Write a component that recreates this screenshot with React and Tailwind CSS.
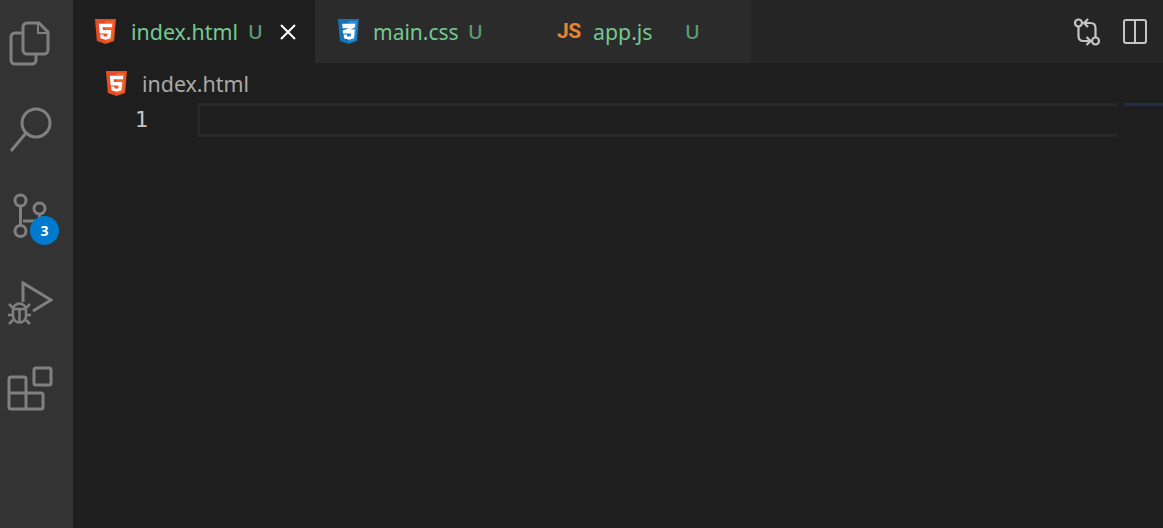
import React from 'react';

const Html5 = ({ className }) => (
  <svg className={className} viewBox="0 0 24 26">
    <path d="M1 0h22l-2 23-9 3-9-3z" fill="#e44d26" />
    <path d="M12 2v22l7.300-2L21 2z" fill="#f16529" />
    <path d="M5 5h14l-.3 3.500H9l.3 3H18l-.8 8.500-5.200 1.700-5.200-1.700-.3-4h3.300l.2 2 2 .6 2-.6.300-3H6z" fill="#fff" />
  </svg>
);

const Css3 = ({ className }) => (
  <svg className={className} viewBox="0 0 24 26">
    <path d="M1 0h22l-2 23-9 3-9-3z" fill="#1572b6" />
    <path d="M12 2v22l7.300-2L21 2z" fill="#2d8fd8" />
    <path d="M5.500 5h13.500l-.3 3.500-4.500 2.500h4.400l-.9 9-5.200 1.700-5.200-1.700-.3-4h3.300l.2 2 2 .6 2-.6.300-3H6.300l-.3-3 6.300-2.500H5.800z" fill="#fff" />
  </svg>
);

const iconStroke = '#808080';

const FilesIcon = () => (
  <svg className="block" width="41" height="45" viewBox="9 21 41 45" fill="none" stroke={iconStroke} strokeWidth="3">
    <path d="M22 33h-7a4 4 0 0 0-4 4v23a4 4 0 0 0 4 4h17a4 4 0 0 0 4-4v-6" />
    <path d="M23 27a4 4 0 0 1 4-4h12l9 9v18a4 4 0 0 1-4 4H27a4 4 0 0 1-4-4z" />
    <path d="M38 23v10h10" strokeWidth="2" />
  </svg>
);

const SearchIcon = () => (
  <svg className="block" width="44" height="46" viewBox="9 107 44 46" fill="none" stroke={iconStroke} strokeWidth="3">
    <circle cx="36" cy="123" r="14" />
    <path d="M26 133L11 151" />
  </svg>
);

const GitIcon = () => (
  <svg className="block" width="35" height="46" viewBox="13 193 35 46" fill="none" stroke={iconStroke} strokeWidth="3">
    <circle cx="20.500" cy="200.500" r="5.500" />
    <circle cx="20.500" cy="231" r="5.500" />
    <circle cx="39.500" cy="208.500" r="5.500" />
    <path d="M20.500 206v19M23 221h12q4.500 0 4.500-4v-2" />
  </svg>
);

const DebugIcon = () => (
  <svg className="block" width="46" height="44" viewBox="7 281 46 44" fill="none" stroke={iconStroke} strokeWidth="3">
    <path d="M23 302v-19l28 17-18 11" />
    <path d="M13 310a6.500 6.500 0 0 1 13 0v6a6.500 6.500 0 0 1-13 0z" strokeWidth="2.500" />
    <path d="M12 309h15M19.500 309v14M9 304l4 4M30 304l-4 4M8 315h5M31 315h-5M9 324l4-4M30 324l-4-4" strokeWidth="2.500" />
  </svg>
);

const ExtensionsIcon = () => (
  <svg className="block" width="46" height="45" viewBox="7 366 46 45" fill="none" stroke={iconStroke} strokeWidth="3">
    <rect x="34" y="368" width="17" height="17" rx="2" />
    <path d="M9 379a2 2 0 0 1 2-2h13a2 2 0 0 1 2 2v14h15a2 2 0 0 1 2 2v12a2 2 0 0 1-2 2H11a2 2 0 0 1-2-2z" />
    <path d="M9 393h17v16" />
  </svg>
);

const CompareIcon = () => (
  <svg width="26" height="28" viewBox="0 0 26 28" fill="none" stroke="#c5c5c5" strokeWidth="2.200">
    <circle cx="4.500" cy="5" r="3.500" />
    <circle cx="21.500" cy="23" r="3.500" />
    <path d="M4.500 9v9q0 5 5 5h7M12.500 19l4 4-4 4" />
    <path d="M21.500 19V10q0-5-5-5H10M14 1l-4 4 4 4" />
  </svg>
);

const SplitIcon = () => (
  <svg width="24" height="25" viewBox="0 0 24 25" fill="none" stroke="#c5c5c5" strokeWidth="2">
    <rect x="1" y="1" width="22" height="23" rx="2" />
    <path d="M12 1v23" />
  </svg>
);

export default function App() {
  return (
    <div className="flex w-[1163px] h-[528px] overflow-hidden bg-[#1e1e1e] font-['Noto_Sans',sans-serif]">
      {/* activity bar */}
      <div className="w-[73px] shrink-0 bg-[#333333] flex flex-col items-start pl-[7px] pt-[21px]">
        <div className="ml-[2px]"><FilesIcon /></div>
        <div className="mt-[41px] ml-[2px]"><SearchIcon /></div>
        <div className="relative mt-[40px] ml-[6px]">
          <GitIcon />
          <span className="absolute left-[17px] top-[23px] w-[29px] h-[29px] rounded-full bg-[#007acc] text-white text-[14px] font-bold flex items-center justify-center">3</span>
        </div>
        <div className="mt-[42px]"><DebugIcon /></div>
        <div className="mt-[41px]"><ExtensionsIcon /></div>
      </div>

      <div className="flex-1 flex flex-col min-w-0">
        {/* tab bar */}
        <div className="h-[63px] shrink-0 bg-[#252526] flex items-center">
          <div className="w-[242px] h-full bg-[#1e1e1e] flex items-center pl-[21px]">
            <Html5 className="w-[23px] h-[25px] -mt-[1px]" />
            <span className="ml-[14px] mt-[1px] w-[117px] text-[#73c991] text-[21.400px] leading-none">index.html</span>
            <span className="mt-[1px] text-[#5a9e73] text-[20px] font-medium leading-none">U</span>
            <svg className="ml-[16px]" width="18" height="18" viewBox="0 0 18 18" stroke="#fff" strokeWidth="2">
              <path d="M2 2l14 14M16 2L2 16" />
            </svg>
          </div>
          <div className="w-[436px] h-full bg-[#2b2b2b] flex">
            <div className="w-[183px] h-full flex items-center pl-[22px]">
              <Css3 className="w-[23px] h-[25px] -mt-[1px]" />
              <span className="ml-[13px] mt-[1px] w-[95px] text-[#73c991] text-[21px] leading-none">main.css</span>
              <span className="mt-[1px] text-[#5a9e73] text-[20px] font-medium leading-none">U</span>
            </div>
            <div className="flex-1 h-full flex items-center pl-[59px]">
              <span className="w-[36px] text-[#e8832f] text-[21px] font-bold tracking-tight font-['Roboto',sans-serif] leading-none">JS</span>
              <span className="mt-[1px] w-[92px] text-[#73c991] text-[21.300px] leading-none">app.js</span>
              <span className="mt-[1px] text-[#5a9e73] text-[20px] font-medium leading-none">U</span>
            </div>
          </div>
          <div className="ml-auto flex items-center gap-[23px] pr-[16px]">
            <CompareIcon />
            <SplitIcon />
          </div>
        </div>

        {/* breadcrumb */}
        <div className="h-[40px] shrink-0 flex items-center pl-[32px]">
          <Html5 className="w-[23px] h-[25px]" />
          <span className="ml-[14px] mt-[1px] text-[#a9a9a9] text-[21.400px] leading-none">index.html</span>
        </div>

        {/* editor */}
        <div className="flex h-[34px]">
          <div className="w-[124px] shrink-0 flex justify-end pr-[49px] items-center">
            <span className="text-[#c6c6c6] text-[22px] font-medium font-['DejaVu_Sans_Mono',monospace] leading-none">1</span>
          </div>
          <div className="w-[920px] h-full border-[3px] border-r-0 border-[#282828]"></div>
          <div className="ml-[7px] w-[39px] h-[3px] bg-[#1f2f48]"></div>
        </div>
      </div>
    </div>
  );
}
